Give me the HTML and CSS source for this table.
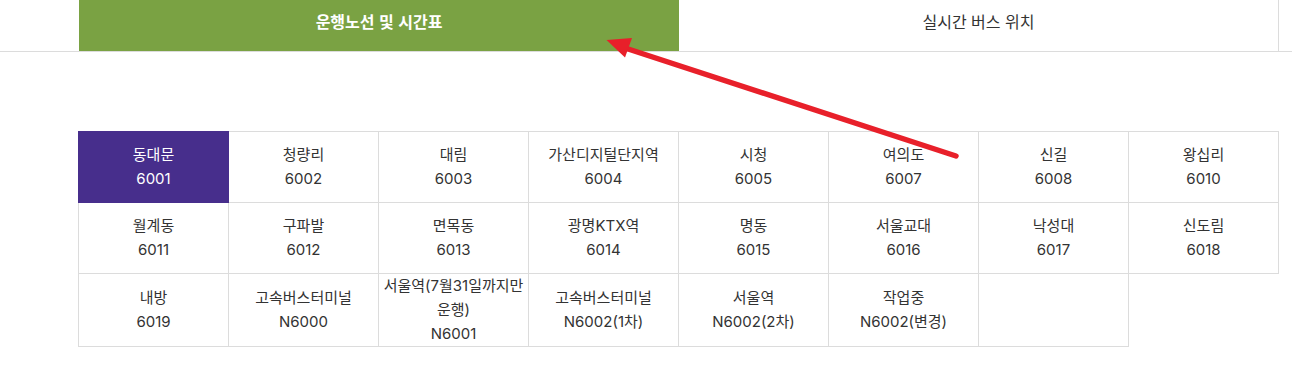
FILE: index.html
```html
<!DOCTYPE html>
<html lang="ko">
<head>
<meta charset="utf-8">
<title>운행노선 및 시간표</title>
<link rel="stylesheet" href="styles.css">
</head>
<body>
<header class="tabbar">
  <nav class="tabs">
    <a class="tab tab-active" href="#">운행노선 및 시간표</a>
    <a class="tab" href="#">실시간 버스 위치</a>
  </nav>
</header>
<main class="content">
  <table class="routes">
    <colgroup>
      <col><col><col><col><col><col><col><col>
    </colgroup>
    <tbody>
      <tr>
        <td class="active">동대문<br>6001</td>
        <td>청량리<br>6002</td>
        <td>대림<br>6003</td>
        <td>가산디지털단지역<br>6004</td>
        <td>시청<br>6005</td>
        <td>여의도<br>6007</td>
        <td>신길<br>6008</td>
        <td>왕십리<br>6010</td>
      </tr>
      <tr>
        <td>월계동<br>6011</td>
        <td>구파발<br>6012</td>
        <td>면목동<br>6013</td>
        <td>광명KTX역<br>6014</td>
        <td>명동<br>6015</td>
        <td>서울교대<br>6016</td>
        <td>낙성대<br>6017</td>
        <td>신도림<br>6018</td>
      </tr>
      <tr>
        <td>내방<br>6019</td>
        <td>고속버스터미널<br>N6000</td>
        <td>서울역(7월31일까지만운행)<br>N6001</td>
        <td>고속버스터미널<br>N6002(1차)</td>
        <td>서울역<br>N6002(2차)</td>
        <td>작업중<br>N6002(변경)</td>
        <td></td>
      </tr>
    </tbody>
  </table>
</main>
<svg class="annotation" width="1292" height="380" viewBox="0 0 1292 380" aria-hidden="true">
  <line x1="956" y1="156" x2="622" y2="47" stroke="#e8202a" stroke-width="5.5" stroke-linecap="round"/>
  <polygon points="606.5,40 632,38 625,57.5" fill="#e8202a"/>
</svg>
</body>
</html>
```
FILE: styles.css
```css
html, body {
  margin: 0;
  padding: 0;
  background: #fff;
}

body {
  font-family: "Inter", "Noto Sans CJK KR", sans-serif;
  color: #333;
  position: relative;
  width: 1292px;
  height: 380px;
  overflow: hidden;
}

.tabbar {
  border-bottom: 1px solid #dcdcdc;
}

.tabs {
  display: flex;
  padding-left: 79px;
}

.tab {
  box-sizing: border-box;
  width: 600px;
  height: 51px;
  padding-top: 9px;
  line-height: 24px;
  text-align: center;
  font-family: "Noto Sans CJK KR", sans-serif;
  font-size: 16px;
  color: #333;
  text-decoration: none;
  border-right: 1px solid #dcdcdc;
}

.tab-active {
  background: #7aa243;
  color: #fff;
  font-weight: 700;
  border-right: none;
}

.content {
  padding-left: 78px;
  padding-top: 79px;
}

.routes {
  border-collapse: collapse;
  table-layout: fixed;
  width: 1201px;
}

.routes col {
  width: 150px;
}

.routes td {
  border: 1px solid #dcdcdc;
  height: 70px;
  padding: 0;
  text-align: center;
  vertical-align: middle;
  font-size: 15px;
  line-height: 24px;
  color: #333;
}

.routes td.active {
  background: #472e8c;
  color: #fff;
  border-color: #472e8c;
}

.annotation {
  position: absolute;
  left: 0;
  top: 0;
  pointer-events: none;
}
```
